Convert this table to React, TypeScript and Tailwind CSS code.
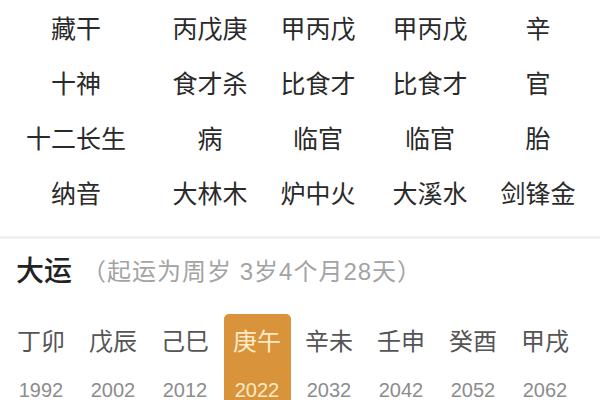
const rows = [
  ["藏干", "丙戊庚", "甲丙戊", "甲丙戊", "辛"],
  ["十神", "食才杀", "比食才", "比食才", "官"],
  ["十二长生", "病", "临官", "临官", "胎"],
  ["纳音", "大林木", "炉中火", "大溪水", "剑锋金"],
];

const dayun = [
  { gz: "丁卯", year: "1992" },
  { gz: "戊辰", year: "2002" },
  { gz: "己巳", year: "2012" },
  { gz: "庚午", year: "2022", active: true },
  { gz: "辛未", year: "2032" },
  { gz: "壬申", year: "2042" },
  { gz: "癸酉", year: "2052" },
  { gz: "甲戌", year: "2062" },
];

export default function App() {
  return (
    <div
      className="h-[400px] w-[600px] overflow-hidden bg-white"
      style={{ fontFamily: '"Liberation Sans", "Noto Sans CJK SC", sans-serif' }}
    >
      {/* pillar table */}
      <div className="pt-[2px]">
        {rows.map((row, i) => (
          <div key={i} className="grid h-[55px] grid-cols-[152px_116px_100px_124px_92px] items-center text-[25px] text-[#2a2a2a]">
            {row.map((cell, j) => (
              <div key={j} className="text-center leading-none">
                {cell}
              </div>
            ))}
          </div>
        ))}
      </div>

      <div className="mt-[14px] h-[3px] bg-[#f1f1f1]" />

      {/* 大运 */}
      <div className="flex h-[66px] items-center pl-[16px]">
        <span className="text-[28px] font-medium text-[#222]">大运</span>
        <span className="ml-[10px] text-[24px] tracking-[1px] text-[#a3a3a3]">（起运为周岁 3岁4个月28天）</span>
      </div>

      <div className="flex pl-[5px]">
        {dayun.map((d) => (
          <div key={d.year} className="w-[72px] pt-[9px]">
            <div
              className={`mx-auto flex h-[120px] w-[67px] flex-col items-center rounded-[5px] ${
                d.active ? "bg-[#d8933b] text-[#fdebc8]" : ""
              }`}
            >
              <div className={`flex h-[56px] items-center text-[24px] ${d.active ? "" : "text-[#555]"}`}>{d.gz}</div>
              <div className={`flex h-[40px] items-center text-[20px] ${d.active ? "" : "text-[#8c8c8c]"}`}>{d.year}</div>
            </div>
          </div>
        ))}
      </div>
    </div>
  );
}
